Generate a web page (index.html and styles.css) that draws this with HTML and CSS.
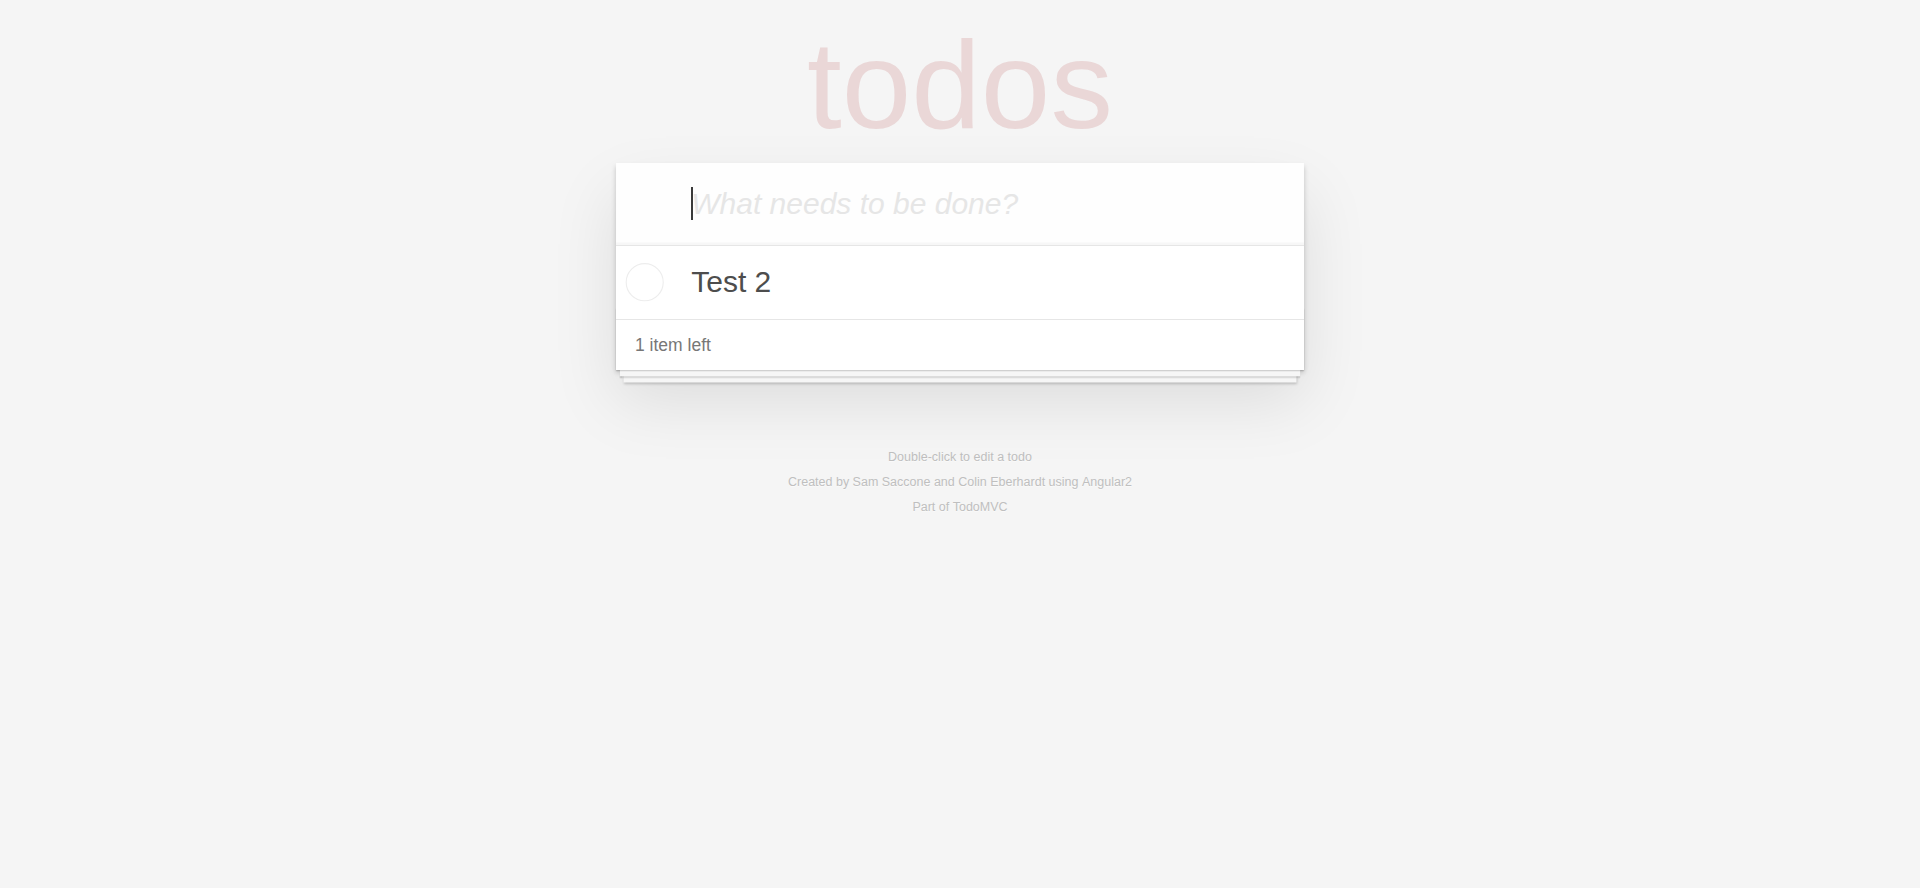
FILE: index.html
```html
<!DOCTYPE html>
<html lang="en">
<head>
<meta charset="utf-8">
<title>Angular2 • TodoMVC</title>
<link rel="stylesheet" href="styles.css">
</head>
<body>
<div class="page">
  <h1 class="title">todos</h1>
  <section class="todoapp">
    <header class="header">
      <input class="new-todo" placeholder="What needs to be done?" autofocus>
      <span class="caret"></span>
    </header>
    <section class="main">
      <ul class="todo-list">
        <li class="todo">
          <svg class="toggle" width="50" height="50" viewBox="-10 -18 100 135"><circle cx="50" cy="50" r="50" fill="none" stroke="#ededed" stroke-width="3"/></svg>
          <label class="todo-label">Test 2</label>
        </li>
      </ul>
    </section>
    <footer class="footer">
      <span class="todo-count"><strong>1</strong> item left</span>
    </footer>
  </section>
  <footer class="info">
    <p>Double-click to edit a todo</p>
    <p>Created by <a href="#">Sam Saccone</a> and <a href="#">Colin Eberhardt</a> using <a href="#">Angular2</a></p>
    <p>Part of <a href="#">TodoMVC</a></p>
  </footer>
</div>
</body>
</html>
```

FILE: styles.css
```css
html, body {
  margin: 0;
  padding: 0;
}
body {
  font-family: "Liberation Sans", Arial, Helvetica, sans-serif;
  font-size: 17.5px;
  line-height: 24.5px;
  background: #f5f5f5;
  color: #4d4d4d;
  font-weight: 300;
}
.page {
  max-width: 687.5px;
  min-width: 287.5px;
  margin: 0 auto;
}
.title {
  margin: 0;
  padding-top: 22px;
  height: 140.5px;
  line-height: 125px;
  font-size: 125px;
  font-weight: 100;
  text-align: center;
  color: rgba(175, 47, 47, 0.15);
}
.todoapp {
  background: #fff;
  margin: 0 0 50px 0;
  position: relative;
  box-shadow: 0 2.5px 5px 0 rgba(0, 0, 0, 0.2), 0 31.25px 62.5px 0 rgba(0, 0, 0, 0.1);
}
.header {
  display: block;
  position: relative;
}
.new-todo {
  display: block;
  margin: 0;
  width: 100%;
  box-sizing: border-box;
  font-family: inherit;
  font-size: 30px;
  line-height: 42px;
  font-weight: inherit;
  color: inherit;
  padding: 20px 20px 20px 75px;
  border: none;
  background: rgba(0, 0, 0, 0.003);
  box-shadow: inset 0 -2.5px 1.25px rgba(0, 0, 0, 0.03);
  outline: none;
  caret-color: transparent;
}
.new-todo::placeholder {
  font-style: italic;
  font-weight: 300;
  color: #e6e6e6;
}
.caret {
  position: absolute;
  left: 75px;
  top: 24px;
  width: 2px;
  height: 33px;
  background: #3a3a3a;
}
.main {
  border-top: 1px solid #e6e6e6;
}
.todo-list {
  margin: 0;
  padding: 0;
  list-style: none;
}
.todo {
  display: flex;
  align-items: center;
  font-size: 30px;
  border-bottom: 1px solid #ededed;
}
.todo:last-child {
  border-bottom: none;
}
.toggle {
  flex: none;
  display: block;
  width: 50px;
  height: 50px;
}
.todo-label {
  flex: 1;
  padding: 18.75px 18.75px 18.75px 25px;
  line-height: 36px;
  word-break: break-all;
  color: #4d4d4d;
}
.footer {
  position: relative;
  color: #777;
  padding: 12.5px 18.75px;
  height: 25px;
  text-align: center;
  border-top: 1px solid #e6e6e6;
}
.footer::before {
  content: '';
  position: absolute;
  right: 0;
  bottom: 0;
  left: 0;
  height: 62.5px;
  overflow: hidden;
  box-shadow: 0 1.25px 1.25px rgba(0, 0, 0, 0.2),
              0 10px 0 -3.75px #f6f6f6,
              0 11.25px 1.25px -3.75px rgba(0, 0, 0, 0.2),
              0 20px 0 -7.5px #f6f6f6,
              0 21.25px 2.5px -7.5px rgba(0, 0, 0, 0.2);
}
.todo-count {
  float: left;
  text-align: left;
  position: relative;
}
.todo-count strong {
  font-weight: 300;
}
.info {
  margin: 81.25px auto 0;
  color: #bfbfbf;
  font-size: 12.5px;
  text-shadow: 0 1.25px 0 rgba(255, 255, 255, 0.5);
  text-align: center;
}
.info p {
  line-height: 1;
  margin: 12.5px 0;
}
.info a {
  color: inherit;
  text-decoration: none;
  font-weight: 400;
}
```
